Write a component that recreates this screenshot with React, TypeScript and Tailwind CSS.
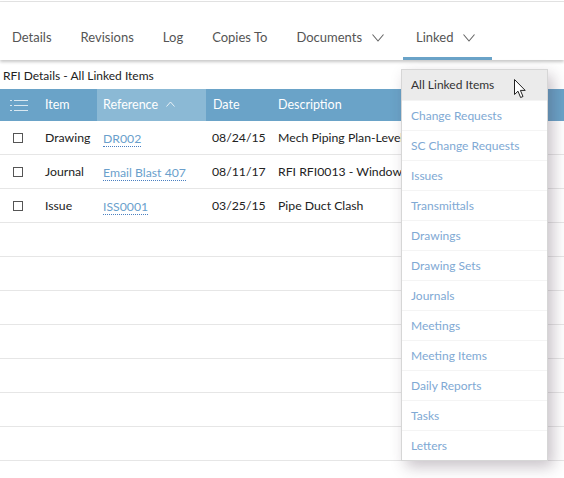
import React from "react";

const tabs = [
  { label: "Details" },
  { label: "Revisions" },
  { label: "Log" },
  { label: "Copies To" },
  { label: "Documents", chevron: true },
  { label: "Linked", chevron: true, active: true },
];

const rows = [
  { item: "Drawing", ref: "DR002", date: "08/24/15", desc: "Mech Piping Plan-Level 1" },
  { item: "Journal", ref: "Email Blast 407", date: "08/11/17", desc: "RFI RFI0013 - Window" },
  { item: "Issue", ref: "ISS0001", date: "03/25/15", desc: "Pipe Duct Clash" },
];

const menuItems = [
  "All Linked Items",
  "Change Requests",
  "SC Change Requests",
  "Issues",
  "Transmittals",
  "Drawings",
  "Drawing Sets",
  "Journals",
  "Meetings",
  "Meeting Items",
  "Daily Reports",
  "Tasks",
  "Letters",
];

const Chevron = () => (
  <svg width="12" height="8" viewBox="0 0 12 8" className="ml-[10px]">
    <polyline points="0.5,0.5 6,7 11.5,0.5" fill="none" stroke="#666" strokeWidth="1.1" />
  </svg>
);

const ListIcon = () => (
  <svg width="18" height="13" viewBox="0 0 18 13">
    <g stroke="rgba(255,255,255,0.75)" strokeWidth="1">
      <line x1="0" y1="1.5" x2="2" y2="1.5" />
      <line x1="4" y1="1.5" x2="18" y2="1.5" />
      <line x1="0" y1="6.5" x2="2" y2="6.5" />
      <line x1="4" y1="6.5" x2="18" y2="6.5" />
      <line x1="0" y1="11.5" x2="2" y2="11.5" />
      <line x1="4" y1="11.5" x2="18" y2="11.5" />
    </g>
  </svg>
);

const Cursor = () => (
  <svg width="13" height="20" viewBox="0 0 13 20" className="absolute z-30 left-[514px] top-[79px]">
    <path
      d="M0.5 0.5 L0.5 15.5 L4 12.2 L6.6 18.5 L9 17.5 L6.4 11.4 L11.2 11.4 Z"
      fill="#fff"
      stroke="#222"
      strokeWidth="1"
      strokeLinejoin="round"
    />
  </svg>
);

export default function App() {
  return (
    <div className="relative w-[564px] h-[478px] overflow-hidden bg-white font-['Lato','Open_Sans',sans-serif] text-[12px] text-[#222]">
      {/* Tab bar */}
      <div className="h-px mt-px bg-[#e4e4e4]" />
      <nav className="relative z-10 h-[58px] flex items-end bg-white shadow-[0_2px_3px_rgba(0,0,0,0.22)]">
        <div className="flex -ml-px">
          {tabs.map((t) => (
            <div
              key={t.label}
              className={`h-[46px] pt-[5px] pl-[13px] flex items-center border-b-[3px] text-[13px] text-[#555] ${
                t.active ? "border-[#6aa3c8] ml-[3px] pr-[17px]" : "border-transparent pr-[13px] mr-[3px]"
              }`}
            >
              {t.label}
              {t.chevron && <Chevron />}
            </div>
          ))}
        </div>
      </nav>

      {/* Title */}
      <div className="h-[29px] flex items-center pt-[2px] px-[3px] text-[12px] text-[#222]">RFI Details - All Linked Items</div>

      {/* Table */}
      <div>
        <div className="h-[32px] flex bg-[#6aa3c8] text-white text-[12.5px]">
          <div className="w-[38px] flex items-center pl-[10px]">
            <ListIcon />
          </div>
          <div className="w-[59px] flex items-center pl-[7px]">Item</div>
          <div className="w-[109px] flex items-center pl-[6px] bg-[#8bb9d5]">
            Reference
            <svg width="9" height="6" viewBox="0 0 9 6" className="ml-[8px] mb-[3px]">
              <polyline points="0.5,5.5 4.5,1 8.5,5.5" fill="none" stroke="rgba(255,255,255,0.8)" strokeWidth="1" />
            </svg>
          </div>
          <div className="w-[65px] flex items-center pl-[7px]">Date</div>
          <div className="flex-1 flex items-center pl-[7px]">Description</div>
        </div>

        {rows.map((r) => (
          <div key={r.ref} className="h-[34px] flex border-b border-[#e6e6e6] text-[12.25px]">
            <div className="w-[38px] flex items-center pl-[13px] pt-px">
              <span className="w-[10px] h-[10px] border border-[#555] bg-white" />
            </div>
            <div className="w-[59px] flex items-center pl-[7px] pt-[2px]">{r.item}</div>
            <div className="w-[109px] flex items-center pl-[6px] pt-[2px]">
              <span className="text-[#6a9fcc] border-b border-dotted border-[#4a7fc0] leading-[15px]">{r.ref}</span>
            </div>
            <div className="w-[65px] flex items-center pl-[6px] pt-[2px]">{r.date}</div>
            <div className="flex-1 flex items-center pl-[7px] pt-[2px] whitespace-nowrap overflow-hidden">{r.desc}</div>
          </div>
        ))}

        {Array.from({ length: 8 }).map((_, i) => (
          <div key={i} className="h-[34px] border-b border-[#e6e6e6]" />
        ))}
      </div>

      {/* Linked dropdown */}
      <div className="absolute z-20 left-[401px] top-[69px] w-[147px] bg-white border border-[#d6d6d6] shadow-[5px_6px_14px_rgba(60,40,60,0.28)]">
        {menuItems.map((m, i) => (
          <div
            key={m}
            className={`h-[30px] flex items-center pl-[9px] text-[12px] ${
              i === 0 ? "bg-[#ebebeb] text-[#333]" : "text-[#80a9d4] border-t border-[#f4f4f4]"
            }`}
          >
            {m}
          </div>
        ))}
      </div>

      <Cursor />
    </div>
  );
}
